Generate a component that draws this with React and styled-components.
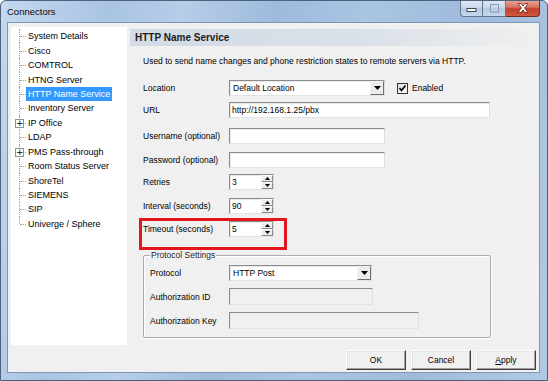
import styled, { createGlobalStyle } from "styled-components";

const GlobalStyle = createGlobalStyle`
  html, body {
    margin: 0;
    padding: 0;
    background: #ffffff;
  }
  body {
    font-family: "Liberation Sans", Arial, sans-serif;
    font-size: 8.5px;
    color: #000;
  }
  * {
    box-sizing: border-box;
  }
`;

const nodes = [
  { label: "System Details" },
  { label: "Cisco" },
  { label: "COMTROL" },
  { label: "HTNG Server" },
  { label: "HTTP Name Service", selected: true },
  { label: "Inventory Server" },
  { label: "IP Office", expandable: true },
  { label: "LDAP" },
  { label: "PMS Pass-through", expandable: true },
  { label: "Room Status Server" },
  { label: "ShoreTel" },
  { label: "SIEMENS" },
  { label: "SIP" },
  { label: "Univerge / Sphere" },
];

const App = () => {
  return (
    <>
      <GlobalStyle />
      <Window>
        <TitleBar>
          <Title>Connectors</Title>
          <Caption>
            <CapButton kind="min">
              <svg width="11" height="9" viewBox="0 0 11 9">
                <rect x="1" y="4.5" width="9" height="3" fill="#fff" stroke="#3c4a5e" strokeWidth="1" />
              </svg>
            </CapButton>
            <CapButton kind="max">
              <svg width="11" height="9" viewBox="0 0 11 9">
                <rect x="1.5" y="0.5" width="8" height="7.5" fill="none" stroke="#8b9ab0" strokeWidth="1" />
                <rect x="3" y="3" width="5" height="3.5" fill="none" stroke="#c9d4e2" strokeWidth="1" />
              </svg>
            </CapButton>
            <CapButton kind="close">
              <svg width="14" height="10" viewBox="0 0 14 10">
                <path
                  d="M2 0.5 L5 0.5 L7 3 L9 0.5 L12 0.5 L8.6 5 L12 9.5 L9 9.5 L7 7 L5 9.5 L2 9.5 L5.4 5 Z"
                  fill="#fff"
                  stroke="#6b1d14"
                  strokeWidth="0.8"
                />
              </svg>
            </CapButton>
          </Caption>
        </TitleBar>
        <Client>
          <Body>
            <Tree>
              {nodes.map((n, i) => (
                <Node key={n.label} last={i === nodes.length - 1}>
                  {n.expandable && <Expander>+</Expander>}
                  <NodeLabel selected={n.selected}>{n.label}</NodeLabel>
                </Node>
              ))}
            </Tree>
            <Panel>
              <Heading>HTTP Name Service</Heading>
              <Description>
                Used to send name changes and phone restriction states to remote servers via HTTP.
              </Description>

              <Row mt={13}>
                <Label>Location</Label>
                <Select w={156}>
                  <span>Default Location</span>
                  <DropArrow />
                </Select>
                <Check>
                  <svg width="9" height="9" viewBox="0 0 9 9">
                    <path d="M1.5 4 L3.5 6.5 L7.5 1.5" fill="none" stroke="#000" strokeWidth="1.6" />
                  </svg>
                </Check>
                <CheckLabel>Enabled</CheckLabel>
              </Row>
              <Row mt={6}>
                <Label>URL</Label>
                <TextBox w={261}>http://192.168.1.25/pbx</TextBox>
              </Row>
              <Row mt={10}>
                <Label>Username (optional)</Label>
                <TextBox w={156} />
              </Row>
              <Row mt={8}>
                <Label>Password (optional)</Label>
                <TextBox w={156} />
              </Row>
              <Row mt={6}>
                <Label>Retries</Label>
                <Spinner value="3" />
              </Row>
              <Row mt={8}>
                <Label>Interval (seconds)</Label>
                <Spinner value="90" />
              </Row>
              <Row mt={7} highlight>
                <Label>Timeout (seconds)</Label>
                <Spinner value="5" />
              </Row>

              <Group>
                <Legend>Protocol Settings</Legend>
                <GroupRow mt={5}>
                  <GroupLabel>Protocol</GroupLabel>
                  <Select w={143}>
                    <span>HTTP Post</span>
                    <DropArrow />
                  </Select>
                </GroupRow>
                <GroupRow mt={7}>
                  <GroupLabel>Authorization ID</GroupLabel>
                  <TextBox w={144} h={17} disabled />
                </GroupRow>
                <GroupRow mt={7}>
                  <GroupLabel>Authorization Key</GroupLabel>
                  <TextBox w={190} h={17} disabled />
                </GroupRow>
              </Group>
            </Panel>
          </Body>
          <Footer>
            <Button>OK</Button>
            <Button>Cancel</Button>
            <Button>
              <u>A</u>pply
            </Button>
          </Footer>
        </Client>
      </Window>
    </>
  );
};

const Spinner = ({ value }) => (
  <SpinBox>
    <SpinValue>{value}</SpinValue>
    <SpinButtons>
      <SpinButton>
        <svg width="5" height="3" viewBox="0 0 5 3">
          <path d="M2.5 0 L5 3 L0 3 Z" fill="#000" />
        </svg>
      </SpinButton>
      <SpinButton>
        <svg width="5" height="3" viewBox="0 0 5 3">
          <path d="M0 0 L5 0 L2.5 3 Z" fill="#000" />
        </svg>
      </SpinButton>
    </SpinButtons>
  </SpinBox>
);

const DropArrow = () => (
  <ArrowButton>
    <svg width="7" height="4" viewBox="0 0 7 4">
      <path d="M0 0 L7 0 L3.5 4 Z" fill="#000" />
    </svg>
  </ArrowButton>
);

const Window = styled.div`
  width: 548px;
  height: 381px;
  display: flex;
  flex-direction: column;
  border: 1px solid #4e627c;
  border-radius: 6px 6px 0 0;
  background: linear-gradient(
    100deg,
    #c4d8ef 0%,
    #a9c4e3 18%,
    #b7cde8 30%,
    #9ebbdc 45%,
    #aac4e3 60%,
    #9fbadb 78%,
    #b2c9e5 100%
  );
  overflow: hidden;
`;

const TitleBar = styled.div`
  height: 21px;
  display: flex;
  justify-content: space-between;
  align-items: flex-start;
  padding-left: 6px;
`;

const Title = styled.div`
  font-size: 9.5px;
  line-height: 22px;
  color: #0b0b0b;
`;

const Caption = styled.div`
  display: flex;
  margin-right: 7px;
  margin-top: -1px;
`;

const CapButton = styled.div`
  height: 17px;
  width: ${(p) => (p.kind === "close" ? 34 : 23)}px;
  display: flex;
  align-items: center;
  justify-content: center;
  border: 1px solid ${(p) => (p.kind === "close" ? "#7a2b20" : "#5f7592")};
  border-left-width: ${(p) => (p.kind === "min" ? 1 : 0)}px;
  border-top: none;
  border-radius: ${(p) =>
    p.kind === "min" ? "0 0 0 4px" : p.kind === "close" ? "0 0 4px 0" : "0"};
  background: ${(p) =>
    p.kind === "close"
      ? "linear-gradient(#e9a99c 0%, #d7735f 45%, #c2402c 55%, #d0573f 100%)"
      : "linear-gradient(#e1eaf5 0%, #cbdaec 45%, #b4c8e2 55%, #c6d7ec 100%)"};
`;

const Client = styled.div`
  flex: 1;
  margin: 0 7px 7px 6px;
  border: 1px solid #7f97b6;
  background: #f0f0f0;
  display: flex;
  flex-direction: column;
`;

const Body = styled.div`
  display: flex;
  padding: 4px 0 0 3px;
`;

const Tree = styled.ul`
  list-style: none;
  margin: 0;
  padding: 2px 0 0;
  width: 116px;
  height: 318px;
  background: #fff;
  flex-shrink: 0;
  font-size: 9px;
`;

const Node = styled.li`
  position: relative;
  height: 14.45px;
  display: flex;
  align-items: center;
  padding-left: 15px;

  &::before {
    content: "";
    position: absolute;
    left: 8px;
    top: 0;
    bottom: ${(p) => (p.last ? "50%" : "0")};
    border-left: 1px dotted #a0a0a0;
  }
  &::after {
    content: "";
    position: absolute;
    left: 9px;
    width: 6px;
    top: 50%;
    border-top: 1px dotted #a0a0a0;
  }
`;

const Expander = styled.span`
  position: absolute;
  left: 4px;
  top: 50%;
  margin-top: -4px;
  width: 9px;
  height: 9px;
  border: 1px solid #919191;
  background: #fff;
  z-index: 1;
  font-size: 9px;
  line-height: 7px;
  text-align: center;
  font-family: "DejaVu Sans", sans-serif;
  color: #000;
`;

const NodeLabel = styled.span`
  height: 14px;
  line-height: 14px;
  padding: 0 2px;
  white-space: nowrap;
  background: ${(p) => (p.selected ? "#3399ff" : "transparent")};
  color: ${(p) => (p.selected ? "#fff" : "#000")};
`;

const Panel = styled.div`
  flex: 1;
  margin-left: 3px;
  padding-top: 2px;
  display: flex;
  flex-direction: column;
`;

const Heading = styled.div`
  height: 17px;
  line-height: 17px;
  padding-left: 5px;
  font-size: 10px;
  font-weight: bold;
  color: #1b1b1b;
  background: linear-gradient(90deg, #d3dbe5 0%, #d9e0e8 55%, #f0f0f0 100%);
`;

const Description = styled.div`
  margin: 10px 0 0 13px;
  line-height: 11px;
  white-space: nowrap;
`;

const Row = styled.div`
  position: relative;
  display: flex;
  align-items: center;
  margin: ${(p) => p.mt}px 0 0 13px;
  height: 16px;

  ${(p) =>
    p.highlight &&
    `
    &::after {
      content: "";
      position: absolute;
      left: -4px;
      top: -3px;
      width: 142px;
      height: 26px;
      border: 3px solid #e3161e;
      pointer-events: none;
    }
  `}
`;

const Label = styled.div`
  width: 86px;
  flex-shrink: 0;
  white-space: nowrap;
`;

const sunken = `
  border: 1px solid;
  border-color: #8c8c8c #dedede #e3e3e3 #8c8c8c;
  box-shadow: inset 1px 1px 0 #e8e8e8;
`;

const TextBox = styled.div`
  width: ${(p) => p.w}px;
  height: ${(p) => p.h || 16}px;
  ${sunken}
  background: ${(p) => (p.disabled ? "#f0f0f0" : "#fff")};
  padding-left: 2px;
  line-height: 14px;
  white-space: nowrap;
`;

const Select = styled.div`
  width: ${(p) => p.w}px;
  height: 16px;
  ${sunken}
  background: #fff;
  display: flex;
  align-items: center;
  justify-content: space-between;
  padding-left: 3px;
  white-space: nowrap;
`;

const ArrowButton = styled.div`
  width: 14px;
  height: 14px;
  display: flex;
  align-items: center;
  justify-content: center;
  background: #ececec;
  border: 1px solid;
  border-color: #f4f4f4 #6f6f6f #6f6f6f #f4f4f4;
`;

const Check = styled.div`
  margin-left: 12px;
  width: 11px;
  height: 11px;
  border: 1px solid #333;
  background: linear-gradient(135deg, #dcdcdc, #fafafa);
  display: flex;
  align-items: center;
  justify-content: center;
`;

const CheckLabel = styled.div`
  margin-left: 4px;
`;

const SpinBox = styled.div`
  width: 45px;
  height: 16px;
  ${sunken}
  background: #fff;
  display: flex;
  align-items: center;
  justify-content: space-between;
  padding-left: 2px;
`;

const SpinValue = styled.span`
  line-height: 14px;
`;

const SpinButtons = styled.div`
  display: flex;
  flex-direction: column;
  width: 12px;
  height: 14px;
`;

const SpinButton = styled.div`
  flex: 1;
  display: flex;
  align-items: center;
  justify-content: center;
  background: #ececec;
  border: 1px solid;
  border-color: #fbfbfb #8a8a8a #8a8a8a #fbfbfb;
`;

const Group = styled.fieldset`
  margin: 13px 0 0 13px;
  width: 348px;
  padding: 0 0 8px 6px;
  border: 1px solid #ababab;
  border-radius: 2px;
  box-shadow: 1px 1px 0 #fff, inset 1px 1px 0 #fff;
`;

const Legend = styled.legend`
  padding: 0 1px;
  line-height: 10px;
  color: #1e1e1e;
`;

const GroupRow = styled.div`
  display: flex;
  align-items: center;
  margin-top: ${(p) => p.mt}px;
`;

const GroupLabel = styled.div`
  width: 79px;
  flex-shrink: 0;
  white-space: nowrap;
`;

const Footer = styled.div`
  display: flex;
  justify-content: flex-end;
  gap: 5px;
  margin-top: 5px;
  padding-right: 3px;
`;

const Button = styled.div`
  width: 60px;
  height: 20px;
  display: flex;
  align-items: center;
  justify-content: center;
  background: #f0f0f0;
  border: 1px solid;
  border-color: #ffffff #404040 #404040 #ffffff;
  box-shadow: inset -1px -1px 0 #a0a0a0, inset 1px 1px 0 #e3e3e3;
  color: #000;
`;

export default App;
